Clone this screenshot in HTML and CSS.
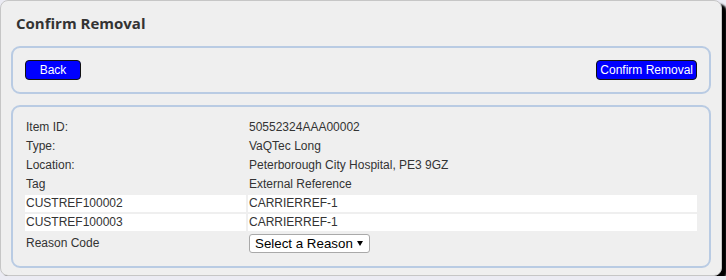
FILE: index.html
```html
<!DOCTYPE html>
<html>
<head>
<meta charset="utf-8">
<link rel="stylesheet" href="styles.css">
</head>
<body>
<div class="dialog">
  <div class="title">Confirm Removal</div>
  <div class="panel actions">
    <button class="btn btn-back">Back</button>
    <button class="btn">Confirm Removal</button>
  </div>
  <div class="panel details">
    <table class="info">
      <colgroup><col class="c-label"><col></colgroup>
      <tr><td>Item ID:</td><td>50552324AAA00002</td></tr>
      <tr><td>Type:</td><td>VaQTec Long</td></tr>
      <tr><td>Location:</td><td>Peterborough City Hospital, PE3 9GZ</td></tr>
      <tr><td>Tag</td><td>External Reference</td></tr>
      <tr class="ref"><td>CUSTREF100002</td><td>CARRIERREF-1</td></tr>
      <tr class="ref"><td>CUSTREF100003</td><td>CARRIERREF-1</td></tr>
      <tr class="reason"><td>Reason Code</td><td><span class="select-wrap"><select class="select"><option>Select a Reason</option></select></span></td></tr>
    </table>
  </div>
</div>
</body>
</html>
```
FILE: styles.css
```css
html, body {
  margin: 0;
  padding: 0;
  background: #ebebf3;
}
body {
  font-family: "Liberation Sans", Arial, sans-serif;
  font-size: 12px;
  color: #333;
}
.dialog {
  width: 720px;
  background: #efefef;
  border: 1px solid #c6c6c6;
  border-radius: 8px;
  box-shadow: 5px 4px 2px #000;
  padding-bottom: 7px;
}
.title {
  font-family: "Open Sans", "Liberation Sans", sans-serif;
  font-weight: 700;
  font-size: 15px;
  line-height: 22px;
  color: #333;
  padding: 11px 15px 0;
}
.panel {
  margin: 12px 10px 0;
  border: 2px solid #b9cbe3;
  border-radius: 9px;
  background: #efefef;
}
.actions {
  display: flex;
  justify-content: space-between;
  align-items: center;
  padding: 12px;
}
.details {
  margin-top: 11px;
  padding: 10px;
}
.btn {
  font-family: "Liberation Sans", Arial, sans-serif;
  font-size: 12px;
  line-height: 18px;
  height: 20px;
  padding: 0 3px;
  color: #fff;
  background: #0000ff;
  border: 1px solid #111;
  border-radius: 4px;
}
.btn-back {
  width: 56px;
}
.info {
  width: 100%;
  border-spacing: 2px;
  table-layout: fixed;
}
.c-label {
  width: 221px;
}
.info td {
  padding: 1px;
  line-height: 15px;
  vertical-align: middle;
  white-space: nowrap;
}
.ref td {
  background: #fff;
}
.select-wrap {
  position: relative;
  display: inline-block;
  vertical-align: middle;
}
.select-wrap::after {
  content: "";
  position: absolute;
  right: 7px;
  top: 7px;
  border-left: 3px solid transparent;
  border-right: 3px solid transparent;
  border-top: 5px solid #000;
  pointer-events: none;
}
.select {
  -webkit-appearance: none;
  appearance: none;
  display: block;
  width: 121px;
  height: 19px;
  margin: 0;
  padding: 0 0 0 5px;
  font-family: "Liberation Sans", Arial, sans-serif;
  font-size: 13.333px;
  color: #000;
  background: #fff;
  border: 1px solid #a9a9a9;
  border-radius: 3px;
}
```
